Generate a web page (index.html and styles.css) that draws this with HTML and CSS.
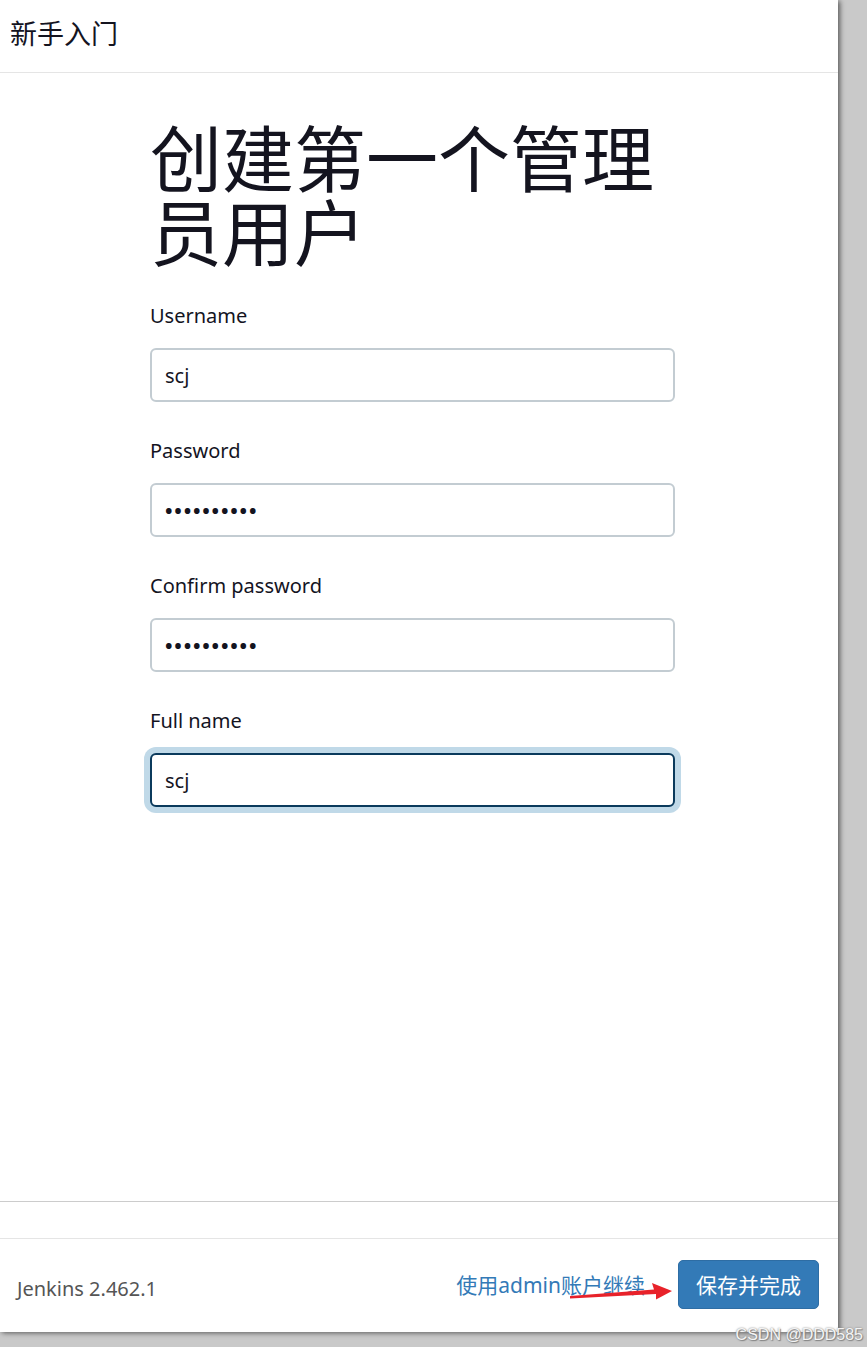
FILE: index.html
```html
<!DOCTYPE html>
<html lang="zh-CN">
<head>
  <meta charset="UTF-8">
  <title>新手入门 - Jenkins</title>
  <meta name="viewport" content="width=device-width, initial-scale=1.0">
  <link rel="stylesheet" href="styles.css">
</head>
<body>
  <div class="dialog">
    <div class="dialog-header">新手入门</div>

    <div class="dialog-body">
      <h1>创建第一个管理员用户</h1>

      <form class="user-form">
        <label for="username">Username</label>
        <input type="text" id="username" value="scj">

        <label for="password1">Password</label>
        <input type="password" id="password1" value="1234567890">

        <label for="password2">Confirm password</label>
        <input type="password" id="password2" value="1234567890">

        <label for="fullname">Full name</label>
        <input type="text" id="fullname" class="focused" value="scj">
      </form>
    </div>

    <div class="dialog-spacer"></div>

    <div class="dialog-footer">
      <span class="version">Jenkins 2.462.1</span>
      <div class="actions">
        <a href="#" class="skip-link">使用admin账户继续</a>
        <button class="save-btn">保存并完成</button>
      </div>
    </div>

    <!-- screenshot annotation -->
    <svg class="arrow" width="110" height="24" viewBox="0 0 110 24">
      <path d="M2 17 L86 10.5 L84 4 L104 12 L88 20.5 L88 15 L2 19.5 Z" fill="#e8222a"/>
    </svg>
  </div>

  <div class="watermark">CSDN @DDD585</div>
</body>
</html>
```

FILE: styles.css
```css
* { box-sizing: border-box; }
body {
  margin: 0;
  background: #c9c9c9;
  font-family: "Noto Sans", "Noto Sans CJK SC", sans-serif;
  color: #14141f;
  width: 867px;
  height: 1347px;
  overflow: hidden;
  position: relative;
}
.dialog {
  width: 838px;
  height: 1332px;
  background: #fff;
  box-shadow: 2px 1px 5px rgba(0, 0, 0, 0.55);
  display: flex;
  flex-direction: column;
  position: relative;
}
.dialog-header {
  height: 73px;
  padding: 0 0 7px 10px;
  display: flex;
  align-items: center;
  font-size: 27px;
  border-bottom: 1px solid #e5e5e5;
  flex-shrink: 0;
}
.dialog-body {
  flex: 1;
  padding: 0 163px 0 150px;
}
h1 {
  margin: 48px 0 0;
  font-size: 72px;
  font-weight: 400;
  line-height: 74px;
  width: 540px;
}
.user-form {
  display: flex;
  flex-direction: column;
  margin-top: 33px;
}
label {
  font-size: 20px;
  line-height: 28px;
  margin-bottom: 18px;
}
input {
  height: 54px;
  width: 525px;
  padding: 0 13px;
  border: 2px solid #c3ccd2;
  border-radius: 6px;
  font-family: inherit;
  font-size: 20px;
  color: #14141f;
  margin-bottom: 35px;
  outline: none;
}
input[type="password"] {
  letter-spacing: 1.8px;
  font-weight: 700;
}
input.focused {
  border-color: #0b3a5c;
  box-shadow: 0 0 0 6px #c0d9e8;
}
.dialog-spacer {
  height: 38px;
  border-top: 1px solid #cccccc;
  border-bottom: 1px solid #e5e5e5;
  flex-shrink: 0;
}
.dialog-footer {
  height: 93px;
  display: flex;
  align-items: center;
  justify-content: space-between;
  padding: 0 19px 0 17px;
  flex-shrink: 0;
}
.version {
  font-size: 20px;
  color: #555;
  margin-top: 6px;
}
.actions {
  display: flex;
  align-items: center;
  gap: 33px;
  margin-top: -3px;
}
.skip-link {
  color: #337ab7;
  font-size: 21px;
  text-decoration: none;
}
.save-btn {
  background: #337ab7;
  color: #fff;
  border: 1px solid #2e6da4;
  border-radius: 5px;
  font-family: inherit;
  font-size: 21px;
  height: 49px;
  padding: 0 17px;
  cursor: pointer;
}
.arrow {
  position: absolute;
  left: 568px;
  top: 1279px;
}
.watermark {
  position: absolute;
  right: 4px;
  bottom: 3px;
  font-family: "Liberation Sans", sans-serif;
  font-size: 16px;
  color: #f4f4f4;
  text-shadow: 0 0 2px #777, 1px 1px 1px #888;
}
```
